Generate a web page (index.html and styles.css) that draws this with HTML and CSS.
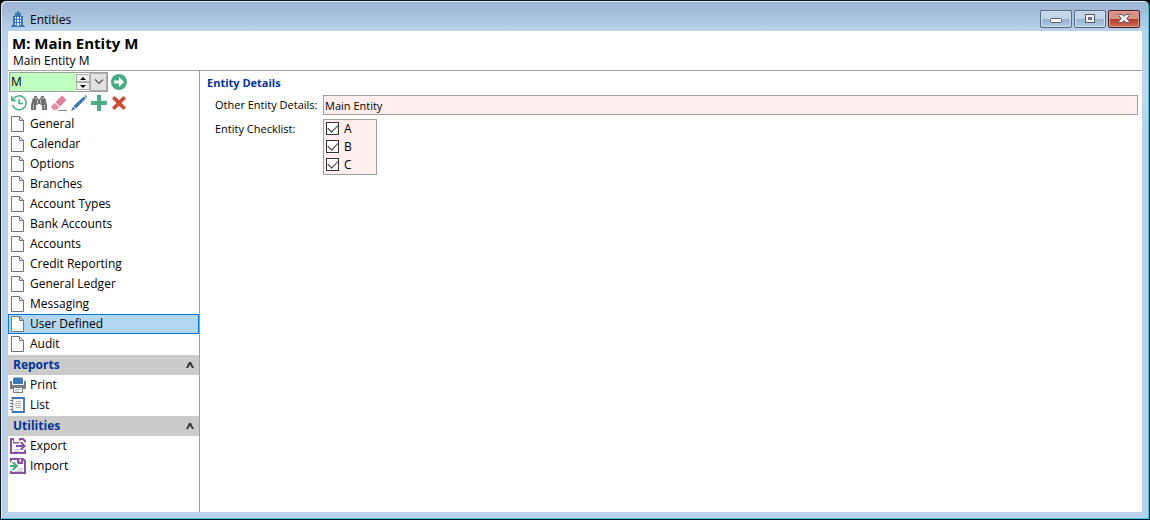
FILE: index.html
```html
<!DOCTYPE html>
<html lang="en">
<head>
<meta charset="utf-8">
<title>Entities</title>
<link rel="stylesheet" href="styles.css">
</head>
<body>
<svg class="defs" aria-hidden="true">
  <symbol id="page" viewBox="0 0 16 16"><path d="M1.500 .5h8l4 4v11h-12zM9.500 .5v4h4" fill="#fff" stroke="#737373"/></symbol>
</svg>
<div class="window">
  <header class="titlebar">
    <svg class="icon" viewBox="0 0 16 16"><path d="M7 0h2v2h2v3h2v9h1v1h1v1H1v-1h1v-1h1V5h2V2h2z" fill="#3b76b5"/><path d="M5 6h1v2H5zm2 0h2v2H7zm3 0h1v2h-1zM5 9h1v2H5zm2 0h2v2H7zm3 0h1v2h-1zM5 12h1v2H5zm2 0h2v3H7zm3 0h1v2h-1z" fill="#e8f1fa"/></svg>
    <span class="caption">Entities</span>
    <div class="controls">
      <button class="control" aria-label="Minimize"><svg viewBox="0 0 12 10"><rect x=".5" y="4.500" width="11" height="4" rx="1" fill="#fff" stroke="#596273"/></svg></button>
      <button class="control" aria-label="Maximize"><svg viewBox="0 0 12 10"><path d="M1.500 .5h9v8h-9z" fill="#f5f7fa" stroke="#4c5568"/><path d="M4.500 3.500h3v2h-3z" fill="#91aed0" stroke="#4c5568"/></svg></button>
      <button class="control close" aria-label="Close"><svg viewBox="0 0 12 10"><path d="M.5 .5h3.500l2 2 2-2h3.500v1L8.500 4.500l3 3v1H8l-2-2-2 2H.5v-1l3-3-3-3z" fill="#f5f5f5" stroke="#535666"/></svg></button>
    </div>
  </header>
  <main class="client">
    <div class="heading">
      <h1>M: Main Entity M</h1>
      <p>Main Entity M</p>
    </div>
    <div class="body">
      <nav class="sidebar">
        <div class="picker">
          <div class="combo">
            <input class="code" type="text" value="M" aria-label="Entity code">
            <div class="spin">
              <button aria-label="Previous"><svg viewBox="0 0 6 3"><path d="M3 0l3 3H0z"/></svg></button>
              <button aria-label="Next"><svg viewBox="0 0 6 3"><path d="M0 0h6L3 3z"/></svg></button>
            </div>
            <button class="drop" aria-label="Open list"><svg viewBox="0 0 10 6"><path d="M1 .5l4 4 4-4" fill="none" stroke="#555" stroke-width="1.200"/></svg></button>
          </div>
          <button class="tool" aria-label="Go"><svg class="icon" viewBox="0 0 16 16"><circle cx="8" cy="8" r="8" fill="#4aab84"/><path d="M3 6.500h5V3l5 5-5 5V9.500H3z" fill="#fff"/></svg></button>
        </div>
        <div class="toolbar">
          <button class="tool" aria-label="History"><svg class="icon" viewBox="0 0 16 16"><path d="M2 4.500A7 7 0 1 1 1.500 10M.8 1v4.500h4.500M8 4v4.500h4" fill="none" stroke="#4aab84" stroke-width="1.500"/></svg></button>
          <button class="tool" aria-label="Find"><svg class="icon" viewBox="0 0 16 16"><path d="M3 1h3v1.500h1V4h2V2.500h1V1h3v1.500l1.500 1.500L16 10v5h-5v-5H9.500V9h-3v1H5v5H0v-5l1.500-6L3 2.500z" fill="#6e6e6e"/><path d="M6.500 4.500v4M9.500 4.500v4M2.500 9.500V14M13.500 9.500V14M3 3h3M10 3h3" stroke="#fff" stroke-width=".6"/></svg></button>
          <button class="tool" aria-label="Clear"><svg class="icon" viewBox="0 0 16 16"><path d="M11 .5L15.500 5 9 11.500 4.500 7z" fill="#e07f98"/><path d="M3.800 7.700l4.500 4.500L5.500 15H2.500L.2 12.500V11.300z" fill="#e58fa5"/><path d="M7 15.500h9" stroke="#888"/></svg></button>
          <button class="tool" aria-label="Edit"><svg class="icon" viewBox="0 0 16 16"><path d="M12.800 1.400l2 2L5 13.500l-2.500-2.500z" fill="#3b76b5"/><path d="M13.500 .7L14.500 0 16 1.500l-.7 1.200zM2 11.700L4.300 14 0 16z" fill="#3b76b5"/></svg></button>
          <button class="tool" aria-label="Add"><svg class="icon" viewBox="0 0 16 16"><path d="M6 0h4v6h6v4h-6v6H6v-6H0V6h6z" fill="#4aab84"/></svg></button>
          <button class="tool" aria-label="Delete"><svg class="icon" viewBox="0 0 16 16"><path d="M1 3.500L3.500 1 8 5.300 12.500 1 15 3.500 10.500 8l4.500 4.500-2.500 2.500L8 10.700 3.500 15 1 12.500 5.500 8z" fill="#cb4b32"/></svg></button>
        </div>
        <button class="item"><svg class="icon"><use href="#page"/></svg>General</button>
        <button class="item"><svg class="icon"><use href="#page"/></svg>Calendar</button>
        <button class="item"><svg class="icon"><use href="#page"/></svg>Options</button>
        <button class="item"><svg class="icon"><use href="#page"/></svg>Branches</button>
        <button class="item"><svg class="icon"><use href="#page"/></svg>Account Types</button>
        <button class="item"><svg class="icon"><use href="#page"/></svg>Bank Accounts</button>
        <button class="item"><svg class="icon"><use href="#page"/></svg>Accounts</button>
        <button class="item"><svg class="icon"><use href="#page"/></svg>Credit Reporting</button>
        <button class="item"><svg class="icon"><use href="#page"/></svg>General Ledger</button>
        <button class="item"><svg class="icon"><use href="#page"/></svg>Messaging</button>
        <button class="item selected" aria-current="page"><svg class="icon"><use href="#page"/></svg>User Defined</button>
        <button class="item"><svg class="icon"><use href="#page"/></svg>Audit</button>
        <button class="group" aria-expanded="true">Reports<svg viewBox="0 0 8 6"><path d="M0 6l3-6h2l3 6H6L4 2.500 2 6z"/></svg></button>
        <button class="item"><svg class="icon" viewBox="0 0 16 16"><path d="M0 4h2v4h12V4h2v8h-2v-2H2v2H0z" fill="#747a80"/><path d="M4 .5h8l1 1V7H3V1.500z" fill="#3b76b5"/><path d="M0 7.500h16V12H0z" fill="#747a80"/><path d="M2.500 7.500h11" stroke="#fff" stroke-width=".8"/><path d="M3.500 10.500h9v5h-9z" fill="#fff" stroke="#747a80"/><path d="M5 12.500h6M5 14h4" stroke="#aaa" stroke-width=".8"/></svg>Print</button>
        <button class="item"><svg class="icon" viewBox="0 0 16 16"><path d="M2.500 1h11.500v14H2.500z" fill="#fff" stroke="#3b76b5" stroke-width="1.800"/><path d="M0 3.500h3.500M0 6.500h3.500M0 9.500h3.500M0 12.500h3.500" stroke="#fff" stroke-width="2"/><path d="M0 3.500h3M0 6.500h3M0 9.500h3M0 12.500h3" stroke="#777"/><path d="M6 4.500h5M5 6.500h6M5 8.500h6M6 10.500h5" stroke="#999" stroke-width=".8"/></svg>List</button>
        <button class="group" aria-expanded="true">Utilities<svg viewBox="0 0 8 6"><path d="M0 6l3-6h2l3 6H6L4 2.500 2 6z"/></svg></button>
        <button class="item"><svg class="icon" viewBox="0 0 16 16"><path d="M1 1h12l2 2v12H1z" fill="#fff" stroke="#8a4fa3" stroke-width="2"/><path d="M3 1h8v4.500H3z" fill="#8a4fa3"/><path d="M4 0h5v4H4z" fill="#fff"/><path d="M4.500 11.500h5M4.500 13.300h8" stroke="#aaa" stroke-width=".8"/><path d="M5 6h4V2.500h3.500L16 5v6l-3.500 2.500H9V10H5z" fill="#fff"/><path d="M6 7h6L9.500 4h2.500L16 8l-4 4H9.500L12 9H6z" fill="#8a4fa3"/></svg>Export</button>
        <button class="item"><svg class="icon" viewBox="0 0 16 16"><path d="M1 1h12l2 2v12H1z" fill="#fff" stroke="#8a4fa3" stroke-width="2"/><path d="M7 1h6v5H7z" fill="#8a4fa3"/><path d="M9.500 1h1.500v3H9.500z" fill="#fff"/><path d="M8 11h5M4.500 13.200h8" stroke="#999" stroke-width=".8"/><path d="M0 4.500h1V3h4l5 5-5 5H0z" fill="#fff"/><path d="M0 7h4L1.500 4h2.500L8.500 8 4 12H1.500L4 9H0z" fill="#4aab84"/></svg>Import</button>
      </nav>
      <section class="content">
        <h2>Entity Details</h2>
        <div class="form">
          <label for="other">Other Entity Details:</label>
          <input class="field" id="other" type="text" value="Main Entity">
          <span class="list-label" id="checklist">Entity Checklist:</span>
          <div class="checklist" role="group" aria-labelledby="checklist">
            <label><input type="checkbox" checked>A</label>
            <label><input type="checkbox" checked>B</label>
            <label><input type="checkbox" checked>C</label>
          </div>
        </div>
      </section>
    </div>
  </main>
</div>
</body>
</html>
```
FILE: styles.css
```css
* { box-sizing: border-box; }
html, body { height: 100%; }
body {
  margin: 0;
  background: #000;
  font: 12px/16px "Open Sans", "Noto Sans", sans-serif;
  color: #000;
}
button, input { font: inherit; color: inherit; }
button { margin: 0; padding: 0; border: 0; background: none; }
h1, h2, p { margin: 0; }
.defs { position: absolute; width: 0; height: 0; }
.icon { display: block; width: 16px; height: 16px; flex: none; }

.window {
  display: flex;
  flex-direction: column;
  min-height: 100vh;
  padding: 0 6px 7px;
  border: 1px solid #101318;
  border-radius: 6px 6px 0 0;
  background: linear-gradient(#99b4d1, #b9d1ea 30px, #c3d8ee 100px, #b9d1ea 122px);
  box-shadow: inset -1px -1px #2fd0ee, inset 1px 1px #e2ecf6;
}
.titlebar { display: flex; align-items: flex-start; height: 30px; padding: 10px 3px 0; gap: 4px; }
.caption { flex: 1; padding-top: 1px; }
.controls { display: flex; gap: 2px; margin-top: -1px; }
.control {
  display: flex;
  align-items: center;
  justify-content: center;
  width: 32px;
  height: 18px;
  border: 1px solid #566a87;
  border-radius: 2px;
  background: linear-gradient(#c3d4e7 50%, #98b3d0 50%, #b5cce4);
  box-shadow: inset 0 0 0 1px #d0deed;
}
.control svg { width: 12px; height: 10px; }
.close {
  border-color: #431b24;
  background: linear-gradient(#d99185 50%, #b8382a 50%, #cf6c54);
  box-shadow: inset 0 0 0 1px #dfa195;
}

.client { display: flex; flex: 1; flex-direction: column; margin: 0 1px; background: #fff; }
.heading { height: 40px; padding: 2px 4px 0; border-bottom: 1px solid #a0a0a0; }
h1 { font-size: 15px; line-height: 20px; }
.heading p { padding-left: 1px; line-height: 16px; }
.body { display: flex; flex: 1; }
.sidebar { display: flex; flex-direction: column; width: 192px; border-right: 1px solid #a0a0a0; }

.picker { display: flex; align-items: center; gap: 3px; height: 22px; padding: 0 1px; }
.combo { display: flex; width: 99px; height: 20px; border: 1px solid #a0a0a0; background: #c0ffc0; }
.code { flex: 1; min-width: 0; padding: 0 1px; border: 0; background: none; }
.spin { display: flex; flex-direction: column; justify-content: space-between; padding: 1px 0; background: #fff; }
.spin button { display: flex; align-items: center; justify-content: center; width: 14px; height: 8px; border: 1px solid #adadad; background: #f0f0f0; }
.spin svg { width: 6px; height: 3px; }
.drop { display: flex; align-items: center; justify-content: center; width: 17px; border: 1px solid #adadad; background: #e1e1e1; }
.drop svg { width: 10px; height: 6px; }
.toolbar { display: flex; align-items: center; gap: 4px; height: 21px; padding: 0 3px 1px; }

.item {
  display: flex;
  align-items: center;
  gap: 4px;
  height: 20px;
  padding: 0 1px;
  border: 1px solid transparent;
  text-align: left;
}
.selected { border-color: #0078d7; background: #b3d7f3; }
.group {
  display: flex;
  align-items: center;
  justify-content: space-between;
  height: 20px;
  margin-top: 1px;
  padding: 0 5px;
  background: #cbcbcb;
  color: #003399;
  font-size: 12px;
  font-weight: bold;
}
.group svg { width: 8px; height: 6px; fill: #333; }

.content { flex: 1; padding: 4px 4px 0 7px; }
h2 { font-size: 11px; line-height: 16px; color: #003399; }
.form { display: grid; grid-template-columns: 104px 1fr; gap: 4px; margin: 4px 0 0 8px; }
.form > label, .list-label { font-size: 11px; line-height: 20px; white-space: nowrap; }
.field { width: 100%; height: 20px; padding: 0 1px; border: 1px solid #a0a0a0; background: #ffeeee; font-size: 11px; }
.checklist { width: 54px; border: 1px solid #a0a0a0; background: #ffeeee; }
.checklist label { display: flex; align-items: center; gap: 5px; height: 18px; padding: 0 0 1px 2px; }
.checklist input {
  appearance: none;
  width: 13px;
  height: 13px;
  margin: 0;
  border: 1px solid #333;
  background: #fff;
}
.checklist input:checked::before {
  content: "";
  display: block;
  width: 9px;
  height: 5px;
  margin: 2px 1px;
  border: solid #333;
  border-width: 0 0 1px 1px;
  transform: translateY(-1px) rotate(-45deg);
}
```
